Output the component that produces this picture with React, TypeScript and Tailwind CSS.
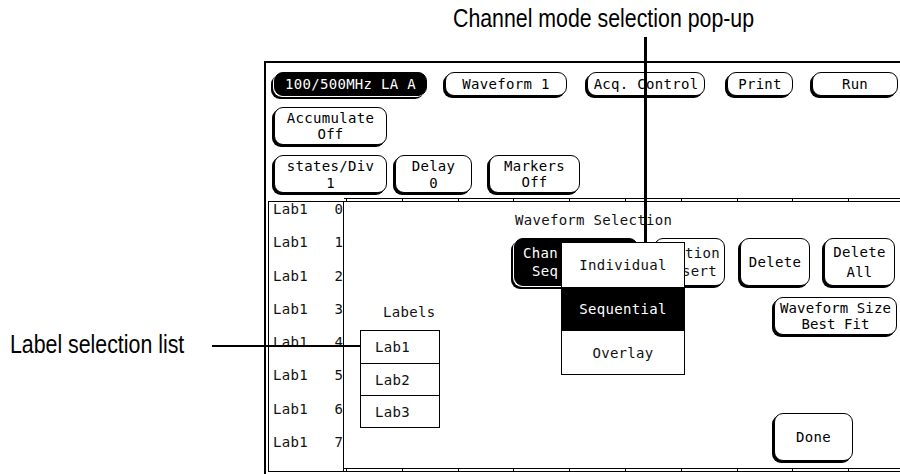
import React from "react";

const mono = "font-['DejaVu_Sans_Mono',monospace] text-[14px] tracking-[0.3px]";

type BtnProps = {
  lines: string[];
  className?: string;
  dark?: boolean;
};

function Btn({ lines, className = "", dark = false }: BtnProps) {
  const tone = dark
    ? "bg-black text-white shadow-[-1px_1px_0_0_#fff,-3px_3px_0_0_#000]"
    : "bg-white text-black shadow-[-2px_2px_0_0_#000]";
  return (
    <div
      className={`flex shrink-0 flex-col items-center rounded-[9px] border border-black ${tone} ${className}`}
    >
      {lines.map((l) => (
        <span key={l} className="whitespace-pre">
          {l}
        </span>
      ))}
    </div>
  );
}

function Rule() {
  const ticks = Array.from({ length: 10 }, (_, i) => i);
  return (
    <div className="flex h-[4px] shrink-0 border-y border-black pl-[2px]">
      {ticks.map((i) => (
        <div key={i} className="h-full w-[55.8px] shrink-0 border-l border-black" />
      ))}
    </div>
  );
}

export default function App() {
  const rows = [0, 1, 2, 3, 4, 5, 6, 7];
  return (
    <div className={`relative h-[474px] w-[900px] overflow-hidden bg-white text-[#111] ${mono}`}>
      {/* Callout annotations */}
      <div className="absolute left-[453px] top-[5px] origin-left scale-x-[0.82] whitespace-nowrap font-['Liberation_Sans',Arial,sans-serif] text-[26px] leading-none tracking-normal text-black">
        Channel mode selection pop-up
      </div>
      <div className="absolute left-[10px] top-[331px] origin-left scale-x-[0.82] whitespace-nowrap font-['Liberation_Sans',Arial,sans-serif] text-[26px] leading-none tracking-normal text-black">
        Label selection list
      </div>
      <div className="absolute left-[644px] top-[37px] z-20 h-[206px] w-[3px] bg-black" />
      <div className="absolute left-[212px] top-[345px] z-20 h-[2px] w-[148px] bg-black" />

      {/* Instrument screen */}
      <div className="ml-[264px] mt-[61px] flex h-[413px] flex-col border-l-2 border-t-2 border-black">
        {/* Row 1 */}
        <div className="mt-[9px] flex pl-[8px] leading-[16px]">
          <Btn dark lines={["100/500MHz LA A"]} className="h-[24px] w-[153px] justify-center" />
          <Btn lines={["Waveform 1"]} className="ml-[18px] h-[24px] w-[122px] justify-center" />
          <Btn lines={["Acq. Control"]} className="ml-[20px] h-[24px] w-[118px] justify-center" />
          <Btn lines={["Print"]} className="ml-[22px] h-[24px] w-[66px] justify-center" />
          <Btn lines={["Run"]} className="ml-[19px] h-[24px] w-[86px] justify-center" />
        </div>

        {/* Row 2 */}
        <div className="mt-[11px] flex pl-[8px]">
          <Btn
            lines={["Accumulate", "Off"]}
            className="h-[38px] w-[113px] justify-start pt-[2px] leading-[16px]"
          />
        </div>

        {/* Row 3 */}
        <div className="mt-[10px] flex pl-[8px]">
          <Btn
            lines={["states/Div", "1"]}
            className="h-[38px] w-[113px] justify-start pt-[2px] leading-[17px]"
          />
          <Btn
            lines={["Delay", "0"]}
            className="ml-[8px] h-[38px] w-[77px] justify-start pt-[2px] leading-[17px]"
          />
          <Btn
            lines={["Markers", "Off"]}
            className="ml-[17px] h-[38px] w-[91px] justify-start pt-[2px] leading-[16px]"
          />
        </div>

        {/* Waveform area */}
        <div className="mt-[5px] flex h-[274px] pl-[2px]">
          {/* Label column */}
          <div className="mt-[3px] flex h-[271px] w-[76px] shrink-0 flex-col border border-black leading-[14px]">
            {rows.map((n) => (
              <div key={n} className="flex h-[33.3px] shrink-0 items-start justify-between pl-[4px]">
                <span>Lab1</span>
                <span className="tracking-normal">{n}</span>
              </div>
            ))}
          </div>

          {/* Waveform Selection dialog */}
          <div className="flex min-w-0 flex-1 flex-col">
            <Rule />
            <div className="flex flex-1 flex-col leading-[16px]">
              <div className="ml-[171px] mt-[10px]">Waveform Selection</div>

              <div className="mt-[10px] flex">
                <div className="relative ml-[170px]">
                  {/* Channel mode button, partly covered by the pop-up */}
                  <div className="flex h-[48px] w-[124px] shrink-0 flex-col items-start justify-center rounded-[9px] border border-black bg-black pl-[8px] leading-[18px] text-white shadow-[-1px_1px_0_0_#fff,-3px_3px_0_0_#000]">
                    <span>Chan</span>
                    <span className="pl-[9px]">Seq</span>
                  </div>
                  <div className="absolute left-[47px] top-[4px] z-10 flex w-[124px] flex-col border border-black bg-white">
                    <div className="flex h-[44px] items-center justify-center">Individual</div>
                    <div className="flex h-[44px] items-center justify-center bg-black text-white">Sequential</div>
                    <div className="flex h-[43px] items-center justify-center">Overlay</div>
                  </div>
                </div>
                {/* Insert button, partly covered by the pop-up */}
                <div className="ml-[16px] flex h-[48px] w-[71px] shrink-0 flex-col items-end justify-center rounded-[9px] border border-black bg-white pr-[4px] leading-[18px] shadow-[-2px_2px_0_0_#000]">
                  <span>tion</span>
                  <span className="pr-[3px]">sert</span>
                </div>
                <Btn lines={["Delete"]} className="ml-[15px] h-[48px] w-[70px] justify-center" />
                <Btn
                  lines={["Delete", "All"]}
                  className="ml-[14px] h-[48px] w-[71px] justify-center leading-[20px]"
                />
              </div>

              <div className="flex items-start">
                <div className="ml-[16px] flex flex-col">
                  <div className="ml-[23px] mt-[18px]">Labels</div>
                  <div className="mt-[10px] flex w-[80px] flex-col border border-black">
                    <div className="flex h-[32px] items-center pl-[14px]">Lab1</div>
                    <div className="flex h-[32px] items-center border-t border-black pl-[14px]">Lab2</div>
                    <div className="flex h-[32px] items-center border-t border-black pl-[14px]">Lab3</div>
                  </div>
                </div>
                <div className="ml-auto mr-[3px] flex flex-col items-start">
                  <Btn
                    lines={["Waveform Size", "Best Fit"]}
                    className="mt-[11px] h-[38px] w-[123px] justify-center tracking-[0.1px]"
                  />
                  <Btn lines={["Done"]} className="mt-[78px] h-[48px] w-[79px] justify-center" />
                </div>
              </div>
            </div>
            <Rule />
          </div>
        </div>
      </div>
    </div>
  );
}
